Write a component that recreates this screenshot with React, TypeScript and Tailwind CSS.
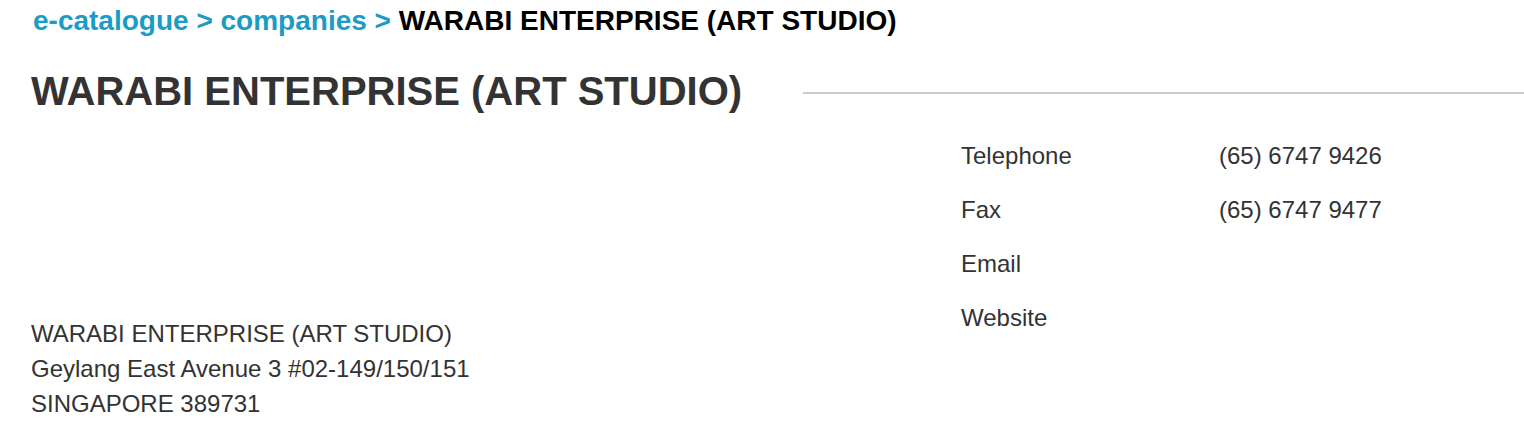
const contacts = [
  { label: "Telephone", value: "(65) 6747 9426" },
  { label: "Fax", value: "(65) 6747 9477" },
  { label: "Email", value: "" },
  { label: "Website", value: "" },
];

const App = () => {
  return (
    <div className="w-[1524px] h-[428px] overflow-hidden bg-white font-['Liberation_Sans',Arial,sans-serif] text-[#333]">
      {/* breadcrumb */}
      <div className="pl-[33px] pt-[6px] text-[28px] font-bold leading-[30px]">
        <a className="text-[#1a9cc4]" href="#">
          e-catalogue
        </a>
        <span className="text-[#1a9cc4]"> &gt; </span>
        <a className="text-[#1a9cc4]" href="#">
          companies
        </a>
        <span className="text-[#1a9cc4]"> &gt; </span>
        <span className="text-black">WARABI ENTERPRISE (ART STUDIO)</span>
      </div>

      {/* title with rule */}
      <div className="flex items-center pl-[31px] mt-[32px]">
        <h1 className="text-[40px] font-bold leading-[46px] whitespace-nowrap">
          WARABI ENTERPRISE (ART STUDIO)
        </h1>
        <div className="flex-1 ml-[61px] h-[2px] bg-[#cccccc] mt-[4px]" />
      </div>

      <div className="grid grid-cols-[930px_1fr] pl-[31px] mt-[15px] text-[24px]">
        {/* address */}
        <div className="pt-[187px] leading-[35px]">
          <div>WARABI ENTERPRISE (ART STUDIO)</div>
          <div>Geylang East Avenue 3 #02-149/150/151</div>
          <div>SINGAPORE 389731</div>
        </div>

        {/* contact details */}
        <dl>
          {contacts.map((c) => (
            <div key={c.label} className="flex h-[54px] items-center">
              <dt className="w-[258px]">{c.label}</dt>
              <dd>{c.value}</dd>
            </div>
          ))}
        </dl>
      </div>
    </div>
  );
};

export default App;
